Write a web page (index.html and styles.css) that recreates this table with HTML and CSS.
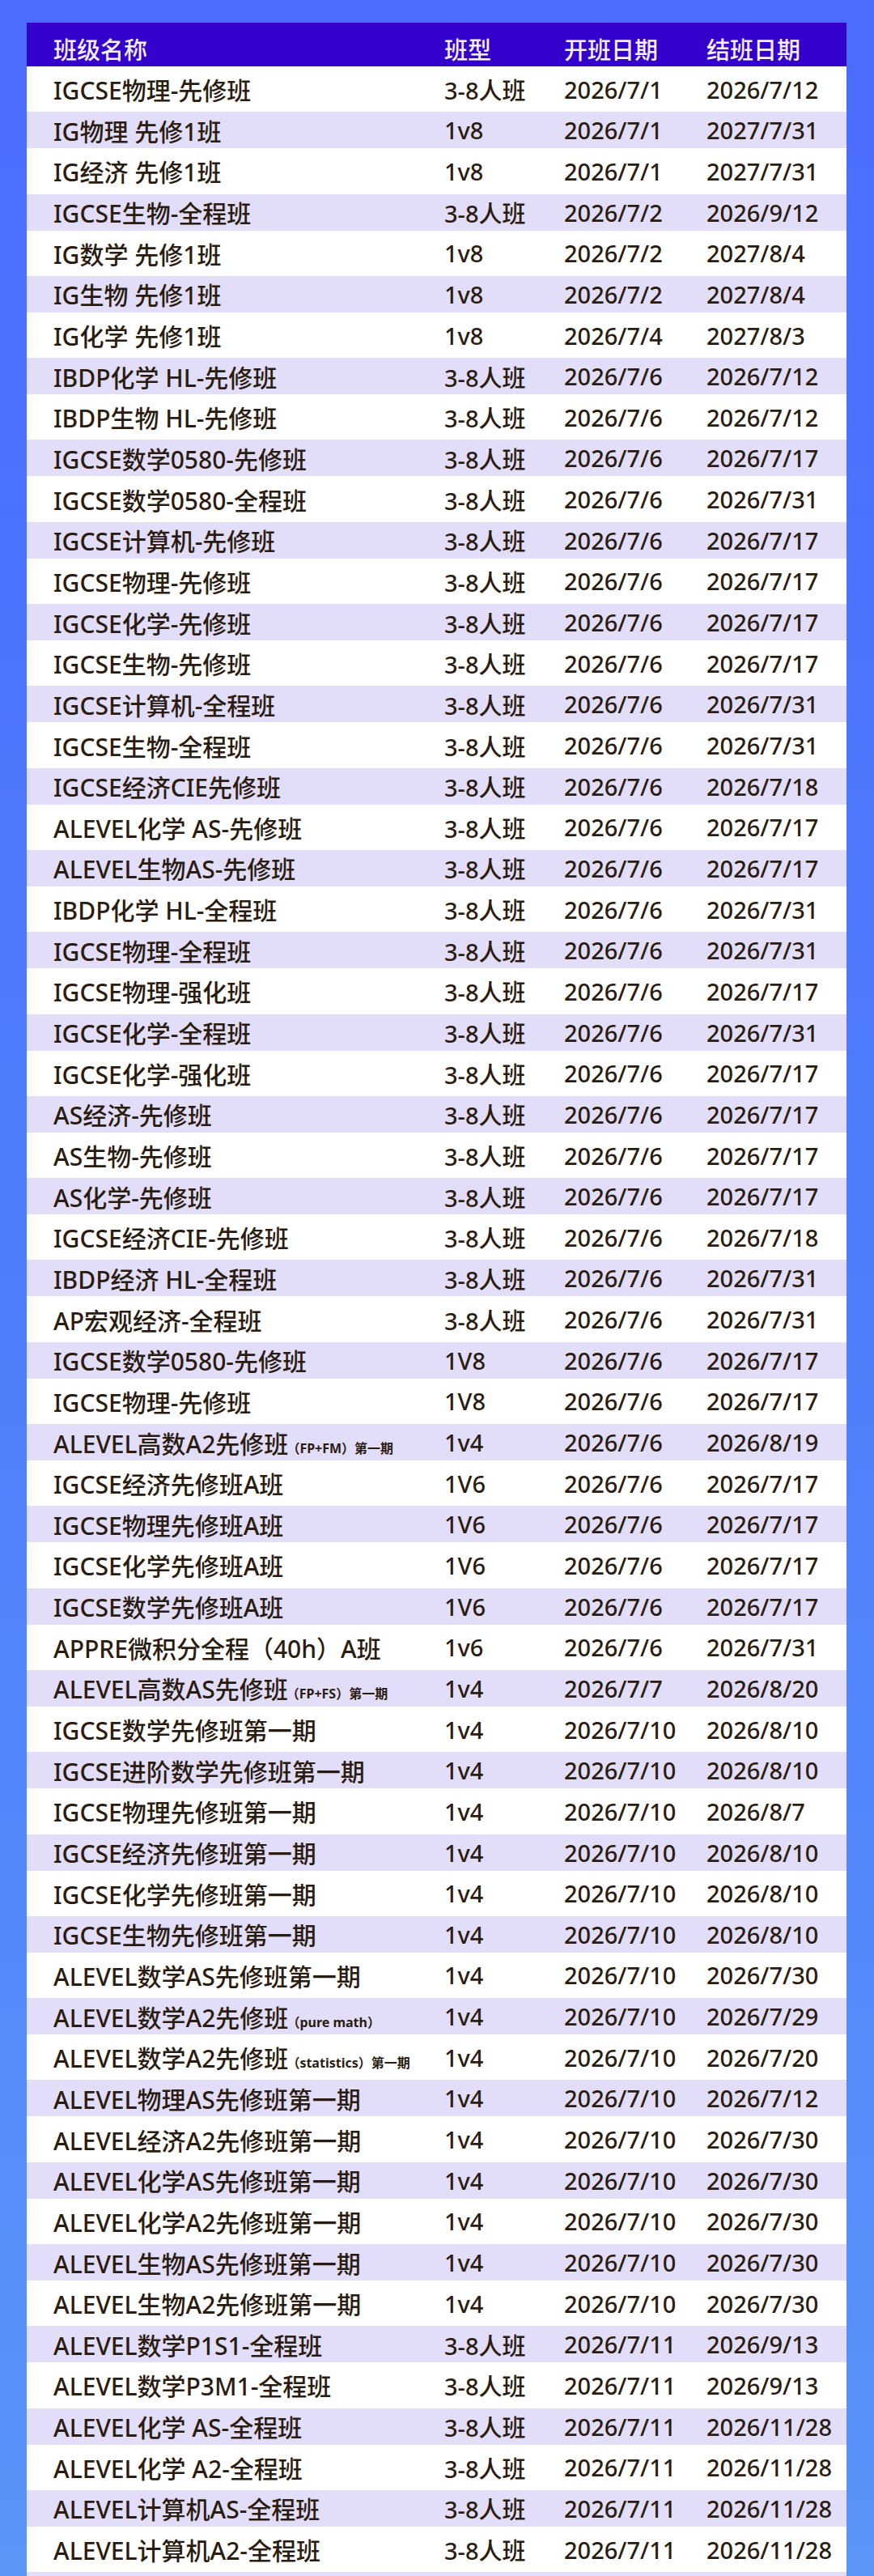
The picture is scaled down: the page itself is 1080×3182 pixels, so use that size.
FILE: index.html
```html
<!DOCTYPE html>
<html lang="zh">
<head>
<meta charset="utf-8">
<title>课程表</title>
<link rel="stylesheet" href="styles.css">
</head>
<body>
<div class="page">
  <div class="table">
    <div class="row head"><div>班级名称</div><div>班型</div><div>开班日期</div><div>结班日期</div></div>
    <div class="row"><div>IGCSE物理-先修班</div><div>3-8人班</div><div>2026/7/1</div><div>2026/7/12</div></div>
    <div class="row"><div>IG物理 先修1班</div><div>1v8</div><div>2026/7/1</div><div>2027/7/31</div></div>
    <div class="row"><div>IG经济 先修1班</div><div>1v8</div><div>2026/7/1</div><div>2027/7/31</div></div>
    <div class="row"><div>IGCSE生物-全程班</div><div>3-8人班</div><div>2026/7/2</div><div>2026/9/12</div></div>
    <div class="row"><div>IG数学 先修1班</div><div>1v8</div><div>2026/7/2</div><div>2027/8/4</div></div>
    <div class="row"><div>IG生物 先修1班</div><div>1v8</div><div>2026/7/2</div><div>2027/8/4</div></div>
    <div class="row"><div>IG化学 先修1班</div><div>1v8</div><div>2026/7/4</div><div>2027/8/3</div></div>
    <div class="row"><div>IBDP化学 HL-先修班</div><div>3-8人班</div><div>2026/7/6</div><div>2026/7/12</div></div>
    <div class="row"><div>IBDP生物 HL-先修班</div><div>3-8人班</div><div>2026/7/6</div><div>2026/7/12</div></div>
    <div class="row"><div>IGCSE数学0580-先修班</div><div>3-8人班</div><div>2026/7/6</div><div>2026/7/17</div></div>
    <div class="row"><div>IGCSE数学0580-全程班</div><div>3-8人班</div><div>2026/7/6</div><div>2026/7/31</div></div>
    <div class="row"><div>IGCSE计算机-先修班</div><div>3-8人班</div><div>2026/7/6</div><div>2026/7/17</div></div>
    <div class="row"><div>IGCSE物理-先修班</div><div>3-8人班</div><div>2026/7/6</div><div>2026/7/17</div></div>
    <div class="row"><div>IGCSE化学-先修班</div><div>3-8人班</div><div>2026/7/6</div><div>2026/7/17</div></div>
    <div class="row"><div>IGCSE生物-先修班</div><div>3-8人班</div><div>2026/7/6</div><div>2026/7/17</div></div>
    <div class="row"><div>IGCSE计算机-全程班</div><div>3-8人班</div><div>2026/7/6</div><div>2026/7/31</div></div>
    <div class="row"><div>IGCSE生物-全程班</div><div>3-8人班</div><div>2026/7/6</div><div>2026/7/31</div></div>
    <div class="row"><div>IGCSE经济CIE先修班</div><div>3-8人班</div><div>2026/7/6</div><div>2026/7/18</div></div>
    <div class="row"><div>ALEVEL化学 AS-先修班</div><div>3-8人班</div><div>2026/7/6</div><div>2026/7/17</div></div>
    <div class="row"><div>ALEVEL生物AS-先修班</div><div>3-8人班</div><div>2026/7/6</div><div>2026/7/17</div></div>
    <div class="row"><div>IBDP化学 HL-全程班</div><div>3-8人班</div><div>2026/7/6</div><div>2026/7/31</div></div>
    <div class="row"><div>IGCSE物理-全程班</div><div>3-8人班</div><div>2026/7/6</div><div>2026/7/31</div></div>
    <div class="row"><div>IGCSE物理-强化班</div><div>3-8人班</div><div>2026/7/6</div><div>2026/7/17</div></div>
    <div class="row"><div>IGCSE化学-全程班</div><div>3-8人班</div><div>2026/7/6</div><div>2026/7/31</div></div>
    <div class="row"><div>IGCSE化学-强化班</div><div>3-8人班</div><div>2026/7/6</div><div>2026/7/17</div></div>
    <div class="row"><div>AS经济-先修班</div><div>3-8人班</div><div>2026/7/6</div><div>2026/7/17</div></div>
    <div class="row"><div>AS生物-先修班</div><div>3-8人班</div><div>2026/7/6</div><div>2026/7/17</div></div>
    <div class="row"><div>AS化学-先修班</div><div>3-8人班</div><div>2026/7/6</div><div>2026/7/17</div></div>
    <div class="row"><div>IGCSE经济CIE-先修班</div><div>3-8人班</div><div>2026/7/6</div><div>2026/7/18</div></div>
    <div class="row"><div>IBDP经济 HL-全程班</div><div>3-8人班</div><div>2026/7/6</div><div>2026/7/31</div></div>
    <div class="row"><div>AP宏观经济-全程班</div><div>3-8人班</div><div>2026/7/6</div><div>2026/7/31</div></div>
    <div class="row"><div>IGCSE数学0580-先修班</div><div>1V8</div><div>2026/7/6</div><div>2026/7/17</div></div>
    <div class="row"><div>IGCSE物理-先修班</div><div>1V8</div><div>2026/7/6</div><div>2026/7/17</div></div>
    <div class="row"><div>ALEVEL高数A2先修班<span class="note">（FP+FM）第一期</span></div><div>1v4</div><div>2026/7/6</div><div>2026/8/19</div></div>
    <div class="row"><div>IGCSE经济先修班A班</div><div>1V6</div><div>2026/7/6</div><div>2026/7/17</div></div>
    <div class="row"><div>IGCSE物理先修班A班</div><div>1V6</div><div>2026/7/6</div><div>2026/7/17</div></div>
    <div class="row"><div>IGCSE化学先修班A班</div><div>1V6</div><div>2026/7/6</div><div>2026/7/17</div></div>
    <div class="row"><div>IGCSE数学先修班A班</div><div>1V6</div><div>2026/7/6</div><div>2026/7/17</div></div>
    <div class="row"><div>APPRE微积分全程（40h）A班</div><div>1v6</div><div>2026/7/6</div><div>2026/7/31</div></div>
    <div class="row"><div>ALEVEL高数AS先修班<span class="note">（FP+FS）第一期</span></div><div>1v4</div><div>2026/7/7</div><div>2026/8/20</div></div>
    <div class="row"><div>IGCSE数学先修班第一期</div><div>1v4</div><div>2026/7/10</div><div>2026/8/10</div></div>
    <div class="row"><div>IGCSE进阶数学先修班第一期</div><div>1v4</div><div>2026/7/10</div><div>2026/8/10</div></div>
    <div class="row"><div>IGCSE物理先修班第一期</div><div>1v4</div><div>2026/7/10</div><div>2026/8/7</div></div>
    <div class="row"><div>IGCSE经济先修班第一期</div><div>1v4</div><div>2026/7/10</div><div>2026/8/10</div></div>
    <div class="row"><div>IGCSE化学先修班第一期</div><div>1v4</div><div>2026/7/10</div><div>2026/8/10</div></div>
    <div class="row"><div>IGCSE生物先修班第一期</div><div>1v4</div><div>2026/7/10</div><div>2026/8/10</div></div>
    <div class="row"><div>ALEVEL数学AS先修班第一期</div><div>1v4</div><div>2026/7/10</div><div>2026/7/30</div></div>
    <div class="row"><div>ALEVEL数学A2先修班<span class="note">（pure math）</span></div><div>1v4</div><div>2026/7/10</div><div>2026/7/29</div></div>
    <div class="row"><div>ALEVEL数学A2先修班<span class="note">（statistics）第一期</span></div><div>1v4</div><div>2026/7/10</div><div>2026/7/20</div></div>
    <div class="row"><div>ALEVEL物理AS先修班第一期</div><div>1v4</div><div>2026/7/10</div><div>2026/7/12</div></div>
    <div class="row"><div>ALEVEL经济A2先修班第一期</div><div>1v4</div><div>2026/7/10</div><div>2026/7/30</div></div>
    <div class="row"><div>ALEVEL化学AS先修班第一期</div><div>1v4</div><div>2026/7/10</div><div>2026/7/30</div></div>
    <div class="row"><div>ALEVEL化学A2先修班第一期</div><div>1v4</div><div>2026/7/10</div><div>2026/7/30</div></div>
    <div class="row"><div>ALEVEL生物AS先修班第一期</div><div>1v4</div><div>2026/7/10</div><div>2026/7/30</div></div>
    <div class="row"><div>ALEVEL生物A2先修班第一期</div><div>1v4</div><div>2026/7/10</div><div>2026/7/30</div></div>
    <div class="row"><div>ALEVEL数学P1S1-全程班</div><div>3-8人班</div><div>2026/7/11</div><div>2026/9/13</div></div>
    <div class="row"><div>ALEVEL数学P3M1-全程班</div><div>3-8人班</div><div>2026/7/11</div><div>2026/9/13</div></div>
    <div class="row"><div>ALEVEL化学 AS-全程班</div><div>3-8人班</div><div>2026/7/11</div><div>2026/11/28</div></div>
    <div class="row"><div>ALEVEL化学 A2-全程班</div><div>3-8人班</div><div>2026/7/11</div><div>2026/11/28</div></div>
    <div class="row"><div>ALEVEL计算机AS-全程班</div><div>3-8人班</div><div>2026/7/11</div><div>2026/11/28</div></div>
    <div class="row"><div>ALEVEL计算机A2-全程班</div><div>3-8人班</div><div>2026/7/11</div><div>2026/11/28</div></div>
    <div class="row"></div>
  </div>
</div>
</body>
</html>
```

FILE: styles.css
```css
html, body {
  margin: 0;
  padding: 0;
}
body {
  width: 1080px;
  height: 3182px;
  overflow: hidden;
  background: linear-gradient(180deg, #4a6cff 0%, #4f7dfc 50%, #5a95f8 100%);
  font-family: "Noto Sans", "Noto Sans CJK SC", sans-serif;
}
.page {
  padding: 28px 34px 0 33px;
}
.table {
  display: flex;
  flex-direction: column;
}
.row {
  display: grid;
  grid-template-columns: 483px 148px 176px 1fr;
  align-items: center;
  padding-left: 33px;
  height: 56.3px;
  flex: none;
  background: #ffffff;
  color: #2b1c12;
  font-size: 29px;
  font-weight: 500;
  white-space: nowrap;
}
.row > div:first-child {
  font-size: 30px;
}
.row:nth-child(odd) {
  height: 45px;
  background: #e2def9;
}
.row.head {
  height: 54px;
  padding-top: 10px;
  box-sizing: border-box;
  background: #3300cc;
  color: #f4efff;
}
.row.head > div:first-child {
  font-size: 29px;
}
.note {
  font-size: 16px;
  font-weight: 700;
  margin-left: -2px;
}
```
